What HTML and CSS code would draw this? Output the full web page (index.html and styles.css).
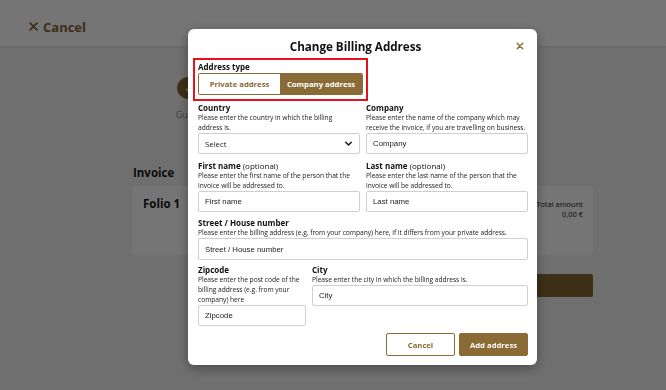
FILE: index.html
```html
<!DOCTYPE html>
<html lang="en">
<head>
<meta charset="utf-8">
<title>Change Billing Address</title>
<link rel="stylesheet" href="styles.css">
</head>
<body>
<div class="page">
  <header class="topbar">
    <a class="cancel-link"><svg class="x" viewBox="0 0 10 10" width="9" height="9"><path d="M1.2 1.2l7.6 7.6M8.8 1.2l-7.6 7.6" stroke="#876834" stroke-width="1.9" stroke-linecap="round"/></svg>Cancel</a>
  </header>
  <div class="stepper">
    <div class="step done"><span class="dot"><svg viewBox="0 0 10 10" width="9" height="9"><path d="M2 5.2l2 2 4-4.5" fill="none" stroke="#fff" stroke-width="1.6"/></svg></span><span class="step-label">Guest</span></div>
    <div class="step"><span class="dot"></span></div>
    <div class="step"><span class="dot"></span></div>
    <div class="step"><span class="dot"><svg viewBox="0 0 10 10" width="9" height="9"><path d="M2 5.2l2 2 4-4.5" fill="none" stroke="#222" stroke-width="1.4"/></svg></span><span class="step-label">Confirm</span></div>
  </div>
  <main class="content">
    <h2 class="section-title">Invoice</h2>
    <div class="folio-card">
      <div class="folio-name">Folio 1</div>
      <div class="folio-total"><div>Total amount</div><div>0,00 €</div></div>
    </div>
    <div class="actions-row"><button class="bg-btn"></button></div>
  </main>
</div>

<div class="overlay">
  <div class="modal">
    <div class="modal-head">
      <h1 class="modal-title">Change Billing Address</h1>
      <button class="close" aria-label="Close"><svg viewBox="0 0 10 10" width="8" height="8"><path d="M1.5 1.5l7 7M8.5 1.5l-7 7" stroke="#8a6a35" stroke-width="1.8" stroke-linecap="round"/></svg></button>
    </div>

    <div class="type-box">
      <div class="label">Address type</div>
      <div class="toggle">
        <button class="tg tg-off">Private address</button>
        <button class="tg tg-on">Company address</button>
      </div>
    </div>

    <div class="grid2">
      <div class="field">
        <div class="label">Country</div>
        <div class="desc narrow">Please enter the country in which the billing address is.</div>
        <div class="input select"><span>Select</span><svg viewBox="0 0 10 10" width="9" height="9"><path d="M1.5 3.2l3.5 3.5 3.5-3.5" fill="none" stroke="#222" stroke-width="1.6"/></svg></div>
      </div>
      <div class="field">
        <div class="label">Company</div>
        <div class="desc">Please enter the name of the company which may receive the invoice, if you are travelling on business.</div>
        <input class="input" placeholder="Company">
      </div>
      <div class="field">
        <div class="label">First name <span class="opt">(optional)</span></div>
        <div class="desc">Please enter the first name of the person that the invoice will be addressed to.</div>
        <input class="input" placeholder="First name">
      </div>
      <div class="field">
        <div class="label">Last name <span class="opt">(optional)</span></div>
        <div class="desc">Please enter the last name of the person that the invoice will be addressed to.</div>
        <input class="input" placeholder="Last name">
      </div>
    </div>

    <div class="field street">
      <div class="label">Street / House number</div>
      <div class="desc">Please enter the billing address (e.g. from your company) here, if it differs from your private address.</div>
      <input class="input" placeholder="Street / House number">
    </div>

    <div class="grid-zip">
      <div class="field">
        <div class="label">Zipcode</div>
        <div class="desc">Please enter the post code of the billing address (e.g. from your company) here</div>
        <input class="input" placeholder="Zipcode">
      </div>
      <div class="field">
        <div class="label">City</div>
        <div class="desc">Please enter the city in which the billing address is.</div>
        <input class="input" placeholder="City">
      </div>
    </div>

    <div class="modal-foot">
      <button class="btn btn-outline">Cancel</button>
      <button class="btn btn-fill">Add address</button>
    </div>
  </div>
</div>
</body>
</html>
```
FILE: styles.css
```css
* { box-sizing: border-box; }
html, body { margin: 0; padding: 0; }
body {
  width: 666px;
  height: 390px;
  overflow: hidden;
  background: #f1f1f1;
  font-family: "Open Sans", "DejaVu Sans", sans-serif;
  color: #1a1a1a;
}
button { font-family: inherit; cursor: pointer; }

/* background page */
.page { height: 390px; }
.topbar {
  height: 46px;
  background: #fff;
  padding: 14px 0 0 29px;
  box-shadow: 0 1px 3px rgba(0,0,0,0.06);
}
.cancel-link {
  font-size: 13px;
  font-weight: 700;
  color: #876834;
  display: inline-flex;
  align-items: center;
  gap: 5px;
}
.stepper {
  display: flex;
  justify-content: space-between;
  width: 390px;
  margin: 31px 0 0 156px;
}
.step {
  width: 64px;
  display: flex;
  flex-direction: column;
  align-items: center;
  gap: 9px;
}
.dot {
  width: 22px; height: 22px;
  border-radius: 50%;
  border: 1px solid #999;
  display: flex; align-items: center; justify-content: center;
}
.step.done .dot { background: #876834; border-color: #876834; }
.step-label { font-size: 9px; color: #888; }
.content { width: 461px; margin: 44px 0 0 132px; }
.section-title { font-size: 11.5px; font-weight: 700; margin: 0 0 6px 1px; }
.folio-card {
  height: 69px;
  background: #fff;
  border-radius: 4px;
  padding: 10px 10px 0 11px;
  display: flex;
  justify-content: space-between;
}
.folio-name { font-size: 11.5px; font-weight: 700; }
.folio-total { font-size: 7.5px; text-align: right; line-height: 10px; padding-top: 3px; }
.actions-row { display: flex; justify-content: flex-end; margin-top: 19px; }
.bg-btn {
  width: 190px; height: 23px;
  border: 0; border-radius: 2px;
  background: #876834; color: #fff;
}

/* overlay + modal */
.overlay {
  position: fixed;
  inset: 0;
  background: rgba(0,0,0,0.54);
  padding: 29px 0 0 188px;
}
.modal {
  width: 349px;
  background: #fff;
  border-radius: 6px;
  padding: 0 9px 9px 10px;
  box-shadow: 0 3px 12px rgba(0,0,0,0.35);
}
.modal-head {
  height: 29px;
  display: flex;
  align-items: center;
  padding-top: 5px;
}
.modal-title {
  flex: 1;
  text-align: center;
  margin: 0;
  font-size: 11.7px;
  font-weight: 700;
  color: #111;
  letter-spacing: -0.05px;
}
.close {
  width: 15px;
  border: 0; background: none; padding: 0 0 0 3px;
  display: flex;
}

.type-box {
  width: 175px;
  margin-left: -5px;
  border: 2px solid #e3121b;
  padding: 1px 3px 4px 3px;
}
.label { font-size: 8px; font-weight: 700; line-height: 11px; color: #111; }
.label .opt { font-weight: 400; }
.toggle {
  display: flex;
  margin-top: 1px;
  width: 165px;
  height: 22px;
  border: 1px solid #8a6a35;
  border-radius: 2px;
  overflow: hidden;
}
.tg { border: 0; font-size: 7.7px; font-weight: 700; padding: 0; }
.tg-off { width: 81px; background: #fff; color: #8a6a35; }
.tg-on { flex: 1; background: #8a6a35; color: #fff; }

.grid2 {
  display: grid;
  grid-template-columns: 162px 162px;
  column-gap: 6px;
  row-gap: 6px;
  margin-top: 1px;
}
.field { display: flex; flex-direction: column; }
.desc { font-size: 6.7px; line-height: 10px; color: #222; flex: 1; letter-spacing: -0.04px; }
.desc.narrow { padding-right: 16px; }
.input {
  display: block;
  width: 100%;
  height: 21px;
  border: 1px solid #cfcfcf;
  border-radius: 2px;
  padding: 0 6px;
  font-family: "Liberation Sans", Arial, sans-serif;
  font-size: 7.8px;
  color: #222;
  background: #fff;
  margin-top: 0;
  outline: none;
}
.input::placeholder { color: #222; opacity: 1; }
.select {
  display: flex;
  align-items: center;
  justify-content: space-between;
  padding: 0 6px 0 6px;
  font-family: "Open Sans", sans-serif;
}
.street { margin-top: 5px; }
.street .input { height: 22px; }
.grid-zip {
  display: grid;
  grid-template-columns: 108px 216px;
  column-gap: 6px;
  margin-top: 4px;
  align-items: start;
}
.modal-foot {
  display: flex;
  justify-content: flex-end;
  gap: 4px;
  margin-top: 7px;
}
.btn {
  width: 69px; height: 23px;
  border-radius: 2px;
  font-size: 7.7px; font-weight: 700;
}
.btn-outline { background: #fff; color: #8a6a35; border: 1px solid #8a6a35; }
.btn-fill { background: #8a6a35; color: #fff; border: 1px solid #8a6a35; }
```
